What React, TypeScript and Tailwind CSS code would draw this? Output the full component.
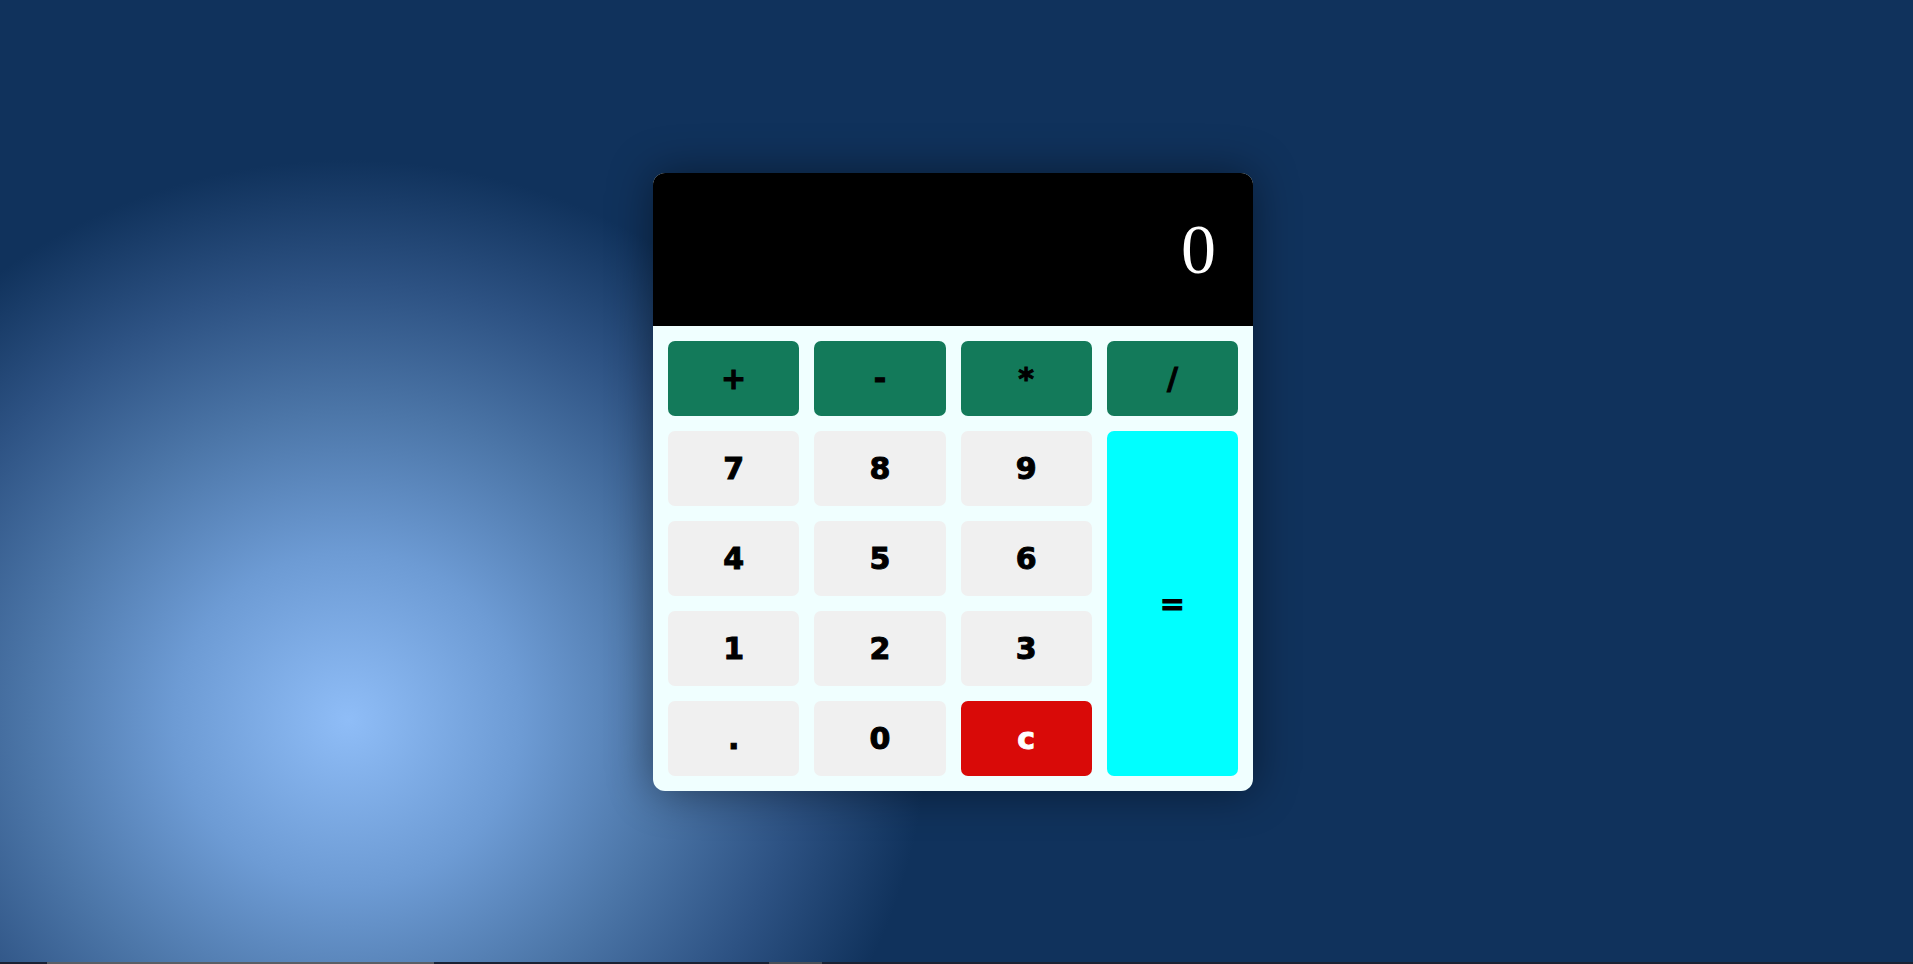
import React, { useState } from 'react';

const keys = [
  { label: '+', kind: 'op' },
  { label: '-', kind: 'op' },
  { label: '*', kind: 'op' },
  { label: '/', kind: 'op' },
  { label: '7', kind: 'num' },
  { label: '8', kind: 'num' },
  { label: '9', kind: 'num' },
  { label: '=', kind: 'eq' },
  { label: '4', kind: 'num' },
  { label: '5', kind: 'num' },
  { label: '6', kind: 'num' },
  { label: '1', kind: 'num' },
  { label: '2', kind: 'num' },
  { label: '3', kind: 'num' },
  { label: '.', kind: 'num' },
  { label: '0', kind: 'num' },
  { label: 'c', kind: 'clear' },
];

export default function App() {
  const [display, setDisplay] = useState('0');

  const press = (label: string) => {
    if (label === 'c') return setDisplay('0');
    if (label === '=') {
      try {
        // eslint-disable-next-line no-new-func
        const result = Function(`return (${display})`)();
        setDisplay(String(result));
      } catch {
        setDisplay('Error');
      }
      return;
    }
    setDisplay((d) => (d === '0' || d === 'Error' ? label : d + label));
  };

  return (
    <div className="relative min-h-screen w-full flex items-center justify-center pr-[7px] bg-[#10325c] bg-[image:radial-gradient(ellipse_580px_560px_at_348px_720px,#8fbdf7_0%,#6d9bd4_30%,#4c76a8_55%,#2d5283_78%,#10325c_100%)]">
      {/* Calculator */}
      <div className="w-[600px] rounded-xl overflow-hidden bg-[#f0ffff] shadow-[0_0_45px_rgba(0,0,0,0.45)]">
        <div className="h-[153px] bg-black flex items-center justify-end pr-[37px]">
          <span className="text-white text-[70px] leading-none" style={{ fontFamily: '"Liberation Serif", "Times New Roman", serif' }}>
            {display}
          </span>
        </div>
        <div
          className="grid grid-cols-4 auto-rows-[75px] gap-[15px] p-[15px]"
          style={{ fontFamily: '"DejaVu Sans", "Liberation Sans", sans-serif' }}
        >
          {keys.map((k) => (
            <button
              key={k.label}
              onClick={() => press(k.label)}
              className={`rounded-[7px] flex items-center justify-center text-[30px] font-bold [-webkit-text-stroke:1px_currentColor] ${
                k.kind === 'op'
                  ? 'bg-[#137a5a] text-black'
                  : k.kind === 'eq'
                  ? 'bg-[#00ffff] text-black row-span-4'
                  : k.kind === 'clear'
                  ? 'bg-[#d90a08] text-white'
                  : 'bg-[#f0f0f0] text-black'
              }`}
            >
              {k.label}
            </button>
          ))}
        </div>
      </div>

      {/* bottom strip */}
      <div className="absolute bottom-0 left-0 right-0 h-[2px] flex bg-[#1b2233]">
        <div className="w-[47px]" />
        <div className="w-[387px] bg-[#5a5f66]" />
        <div className="w-[335px]" />
        <div className="w-[53px] bg-[#4a5058]" />
      </div>
    </div>
  );
}
